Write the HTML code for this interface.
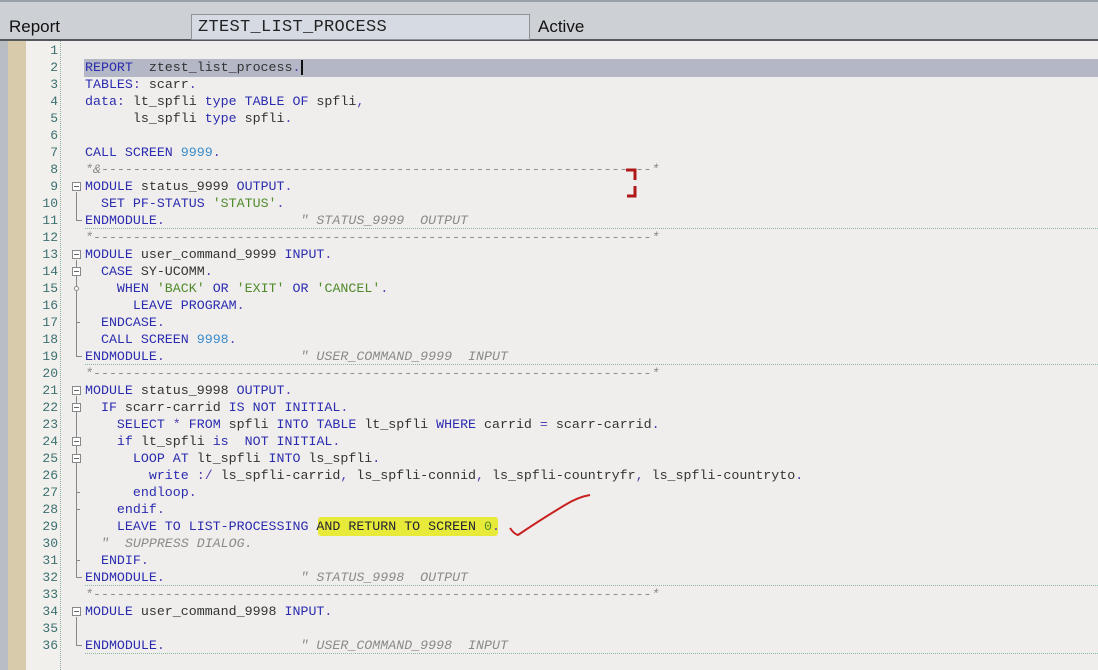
<!DOCTYPE html>
<html><head><meta charset="utf-8"><style>
*{margin:0;padding:0;box-sizing:border-box}
body{width:1098px;height:670px;overflow:hidden;background:#efeeec;position:relative;font-family:"Liberation Mono",monospace}
#top{position:absolute;left:0;top:0;width:1098px;height:41px;background:#cdd0d5;border-top:2px solid #9aa0a8;border-bottom:2px solid #55585c}
#top .lbl{position:absolute;font-family:"Liberation Sans",sans-serif;font-size:17px;color:#111;top:15px}
#box{position:absolute;left:191px;top:12px;width:339px;height:26px;background:#d6dbe3;border:1px solid #8e939a;font-size:17px;color:#222;padding:3px 0 0 6px;letter-spacing:0.3px}
#lg{position:absolute;left:0;top:41px;width:8px;height:629px;background:#b9bec4}
#tan{position:absolute;left:8px;top:41px;width:18px;height:629px;background:#d8cbac}
#gut{position:absolute;left:26px;top:41px;width:35px;height:629px;background:#f1f0ed;border-right:1px dotted #8ab0a0}
.hl{position:absolute;left:84px;top:59px;width:1014px;height:18px;background:#b3b7c6}
.ln{position:absolute;left:26px;width:32px;text-align:right;font-size:13px;color:#3b7070;height:17px;line-height:17px}
.cl{position:absolute;left:85px;font-size:13.3px;line-height:17px;height:17px;white-space:pre;color:#333;letter-spacing:0}
.k{color:#2b2bb0}.s{color:#4f8a2a}.n{color:#3a8ccc}.c{color:#8a8a8a;font-style:italic}.p{color:#5a3ab0}
.dl{position:absolute;left:85px;width:1013px;border-top:1px dotted #8ab8a0}
.fb{position:absolute;left:72px;width:9px;height:9px;border:1px solid #888;background:#fff}
.fb:after{content:"";position:absolute;left:1px;top:3px;width:5px;height:1px;background:#666}
.vl{position:absolute;left:76px;width:1px;background:#888}
.cr{position:absolute;left:76px;width:6px;height:1px;background:#888}
</style></head><body>
<div id="top"><span class="lbl" style="left:9px">Report</span><div id="box">ZTEST_LIST_PROCESS</div><span class="lbl" style="left:538px">Active</span></div>
<div id="lg"></div><div id="tan"></div><div id="gut"></div>
<div class="hl"></div>
<div class="ln" style="top:42px">1</div><div class="ln" style="top:59px">2</div><div class="ln" style="top:76px">3</div><div class="ln" style="top:93px">4</div><div class="ln" style="top:110px">5</div><div class="ln" style="top:127px">6</div><div class="ln" style="top:144px">7</div><div class="ln" style="top:161px">8</div><div class="ln" style="top:178px">9</div><div class="ln" style="top:195px">10</div><div class="ln" style="top:212px">11</div><div class="ln" style="top:229px">12</div><div class="ln" style="top:246px">13</div><div class="ln" style="top:263px">14</div><div class="ln" style="top:280px">15</div><div class="ln" style="top:297px">16</div><div class="ln" style="top:314px">17</div><div class="ln" style="top:331px">18</div><div class="ln" style="top:348px">19</div><div class="ln" style="top:365px">20</div><div class="ln" style="top:382px">21</div><div class="ln" style="top:399px">22</div><div class="ln" style="top:416px">23</div><div class="ln" style="top:433px">24</div><div class="ln" style="top:450px">25</div><div class="ln" style="top:467px">26</div><div class="ln" style="top:484px">27</div><div class="ln" style="top:501px">28</div><div class="ln" style="top:518px">29</div><div class="ln" style="top:535px">30</div><div class="ln" style="top:552px">31</div><div class="ln" style="top:569px">32</div><div class="ln" style="top:586px">33</div><div class="ln" style="top:603px">34</div><div class="ln" style="top:620px">35</div><div class="ln" style="top:637px">36</div>

<div class="cl" style="top:59px"><span class="k">REPORT</span>  ztest_list_process<span class="p">.</span><span style="border-left:2px solid #111;margin-left:1px"></span></div>
<div class="cl" style="top:76px"><span class="k">TABLES</span><span class="p">:</span> scarr<span class="p">.</span></div>
<div class="cl" style="top:93px"><span class="k">data</span><span class="p">:</span> lt_spfli <span class="k">type TABLE OF</span> spfli<span class="p">,</span></div>
<div class="cl" style="top:110px">      ls_spfli <span class="k">type</span> spfli<span class="p">.</span></div>
<div class="cl" style="top:144px"><span class="k">CALL SCREEN</span> <span class="n">9999</span><span class="p">.</span></div>
<div class="cl c" style="top:161px">*&amp;---------------------------------------------------------------------*</div>
<div class="cl" style="top:178px"><span class="k">MODULE</span> status_9999 <span class="k">OUTPUT</span><span class="p">.</span></div>
<div class="cl" style="top:195px">  <span class="k">SET PF-STATUS</span> <span class="s">'STATUS'</span><span class="p">.</span></div>
<div class="cl" style="top:212px"><span class="k">ENDMODULE</span><span class="p">.</span>                 <span class="c">" STATUS_9999  OUTPUT</span></div>
<div class="cl c" style="top:229px">*----------------------------------------------------------------------*</div>
<div class="cl" style="top:246px"><span class="k">MODULE</span> user_command_9999 <span class="k">INPUT</span><span class="p">.</span></div>
<div class="cl" style="top:263px">  <span class="k">CASE</span> SY-UCOMM<span class="p">.</span></div>
<div class="cl" style="top:280px">    <span class="k">WHEN</span> <span class="s">'BACK'</span> <span class="k">OR</span> <span class="s">'EXIT'</span> <span class="k">OR</span> <span class="s">'CANCEL'</span><span class="p">.</span></div>
<div class="cl" style="top:297px">      <span class="k">LEAVE PROGRAM</span><span class="p">.</span></div>
<div class="cl" style="top:314px">  <span class="k">ENDCASE</span><span class="p">.</span></div>
<div class="cl" style="top:331px">  <span class="k">CALL SCREEN</span> <span class="n">9998</span><span class="p">.</span></div>
<div class="cl" style="top:348px"><span class="k">ENDMODULE</span><span class="p">.</span>                 <span class="c">" USER_COMMAND_9999  INPUT</span></div>
<div class="cl c" style="top:365px">*----------------------------------------------------------------------*</div>
<div class="cl" style="top:382px"><span class="k">MODULE</span> status_9998 <span class="k">OUTPUT</span><span class="p">.</span></div>
<div class="cl" style="top:399px">  <span class="k">IF</span> scarr-carrid <span class="k">IS NOT INITIAL</span><span class="p">.</span></div>
<div class="cl" style="top:416px">    <span class="k">SELECT</span> <span class="p">*</span> <span class="k">FROM</span> spfli <span class="k">INTO TABLE</span> lt_spfli <span class="k">WHERE</span> carrid <span class="p">=</span> scarr-carrid<span class="p">.</span></div>
<div class="cl" style="top:433px">    <span class="k">if</span> lt_spfli <span class="k">is</span>  <span class="k">NOT INITIAL</span><span class="p">.</span></div>
<div class="cl" style="top:450px">      <span class="k">LOOP AT</span> lt_spfli <span class="k">INTO</span> ls_spfli<span class="p">.</span></div>
<div class="cl" style="top:467px">        <span class="k">write</span> <span class="p">:/</span> ls_spfli-carrid<span class="p">,</span> ls_spfli-connid<span class="p">,</span> ls_spfli-countryfr<span class="p">,</span> ls_spfli-countryto<span class="p">.</span></div>
<div class="cl" style="top:484px">      <span class="k">endloop</span><span class="p">.</span></div>
<div class="cl" style="top:501px">    <span class="k">endif</span><span class="p">.</span></div>
<div style="position:absolute;left:318px;top:517px;width:180px;height:19px;background:#e8ea3a;border-radius:3px"></div>
<div class="cl" style="top:518px">    <span class="k">LEAVE TO LIST-PROCESSING</span> <span style="color:#223">AND RETURN TO SCREEN</span> <span class="s">0</span><span class="p">.</span></div>
<div class="cl c" style="top:535px">  "  SUPPRESS DIALOG.</div>
<div class="cl" style="top:552px">  <span class="k">ENDIF</span><span class="p">.</span></div>
<div class="cl" style="top:569px"><span class="k">ENDMODULE</span><span class="p">.</span>                 <span class="c">" STATUS_9998  OUTPUT</span></div>
<div class="cl c" style="top:586px">*----------------------------------------------------------------------*</div>
<div class="cl" style="top:603px"><span class="k">MODULE</span> user_command_9998 <span class="k">INPUT</span><span class="p">.</span></div>
<div class="cl" style="top:637px"><span class="k">ENDMODULE</span><span class="p">.</span>                 <span class="c">" USER_COMMAND_9998  INPUT</span></div>

<div class="dl" style="top:228px"></div><div class="dl" style="top:364px"></div><div class="dl" style="top:585px"></div><div class="dl" style="top:653px"></div>

<div class="fb" style="top:182px"></div><div class="vl" style="top:192px;height:28px"></div><div class="cr" style="top:220px"></div>
<div class="fb" style="top:250px"></div><div class="vl" style="top:260px;height:96px"></div><div class="cr" style="top:356px"></div>
<div class="fb" style="top:267px"></div>
<div style="position:absolute;left:74px;top:286px;width:5px;height:5px;border:1px solid #888;border-radius:50%;background:#fff"></div>
<div class="cr" style="top:322px;width:4px"></div>
<div class="fb" style="top:386px"></div><div class="vl" style="top:396px;height:181px"></div><div class="cr" style="top:577px"></div>
<div class="fb" style="top:403px"></div><div class="fb" style="top:437px"></div><div class="fb" style="top:454px"></div>
<div class="cr" style="top:492px;width:4px"></div><div class="cr" style="top:509px;width:4px"></div><div class="cr" style="top:560px;width:4px"></div>
<div class="fb" style="top:607px"></div><div class="vl" style="top:617px;height:28px"></div><div class="cr" style="top:645px"></div>

<svg style="position:absolute;left:0;top:0" width="1098" height="670">
<path d="M626 170 H635 V180 M627 196 H635 V186" stroke="#b01818" stroke-width="3" fill="none"/>
<path d="M510 528 Q514 534 518 535 Q540 520 565 505 Q578 497 590 495" stroke="#c82020" stroke-width="2" fill="none"/>
</svg>
</body></html>
